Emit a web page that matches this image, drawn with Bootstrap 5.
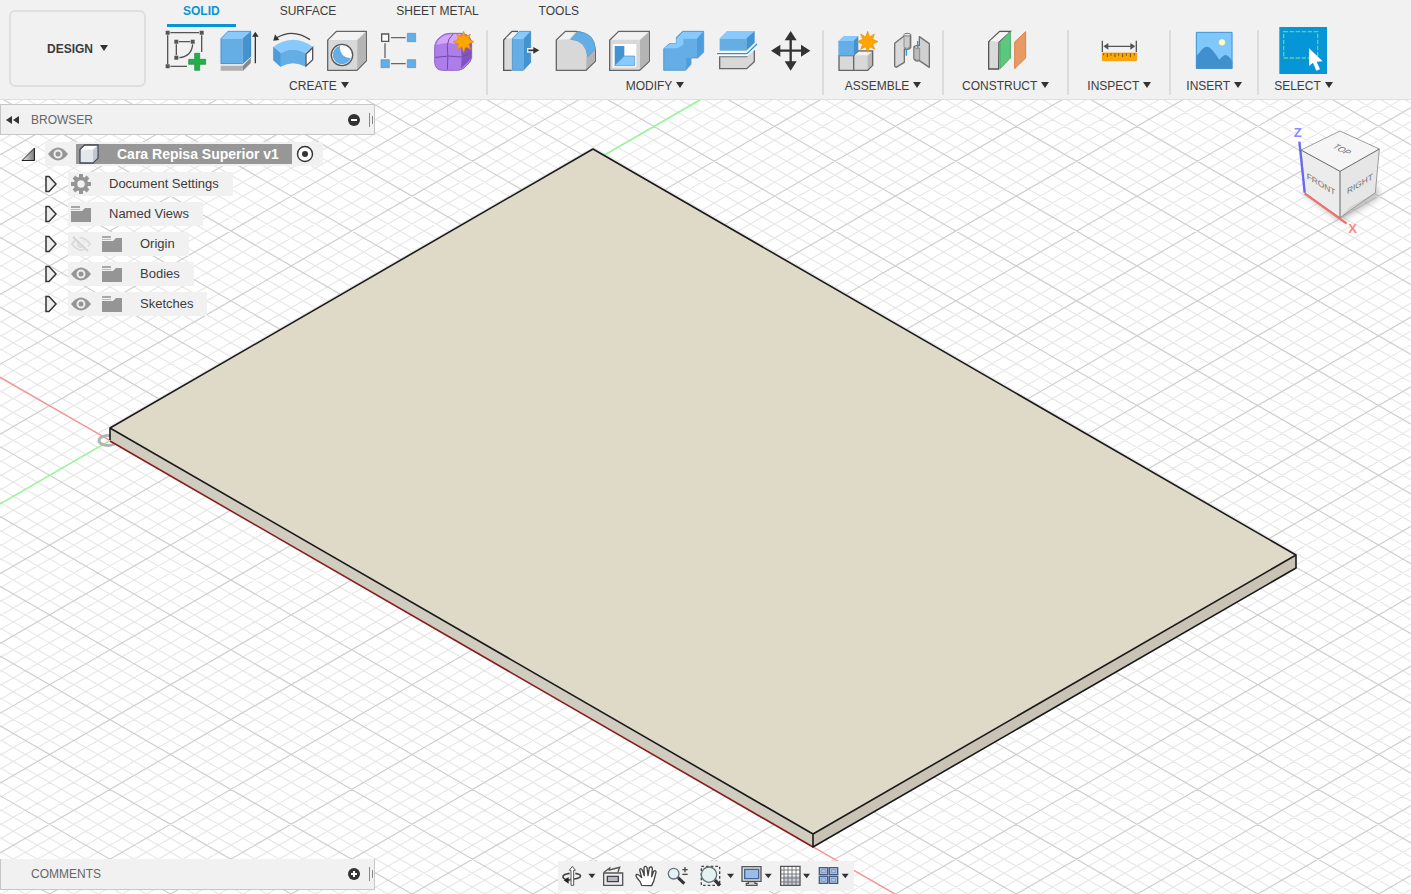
<!DOCTYPE html>
<html lang="en">
<head>
<meta charset="utf-8">
<meta name="viewport" content="width=device-width, initial-scale=1">
<title>Cara Repisa Superior v1</title>
<link href="https://cdn.jsdelivr.net/npm/bootstrap@5.3.0/dist/css/bootstrap.min.css" rel="stylesheet">
<script src="https://cdn.jsdelivr.net/npm/bootstrap@5.3.0/dist/js/bootstrap.bundle.min.js"></script>
<style>
  :root { --panel: #f1f1f1; --ink: #3c3c3c; --accent: #0696d7; --rule: #c6c6c6; }
  body { font-family: "Liberation Sans", Arial, sans-serif; font-size: 12px; color: var(--ink); background: #fff; }
  button { border: 0; background: none; padding: 0; color: inherit; }
  svg { display: block; }
  .ribbon { background: var(--panel); border-bottom: 1px solid #dedede; }
  .workspace { width: 137px; margin: 10px 6px 12px 9px; border: 2px solid #dfdfdf; border-radius: 6px; font-weight: bold; }
  .tabs { padding-left: 15px; gap: 28px; }
  .tabs .nav-link { height: 27px; padding: 0 16px; line-height: 22px; border-radius: 0; border-bottom: 3px solid transparent; color: var(--ink); }
  .tabs .nav-link.active { color: var(--accent); border-bottom-color: var(--accent); font-weight: bold; }
  .tool-group { padding: 0 5px; }
  .tool-single { padding: 0 18px; }
  .tool-narrow { padding: 0 15px; }
  .tool svg { width: 54px; height: 47px; }
  .group-label { line-height: 25px; white-space: nowrap; }
  .divider { width: 2px; margin: 3px 0 4px; background: #dcdcdc; }
  .caret { display: inline-block; border: 4px solid transparent; border-top: 6px solid #333; border-bottom: 0; margin-left: 4px; vertical-align: 2px; }
  .workspace .caret { margin-left: 7px; }
  .dock { width: 375px; height: 31px; background: var(--panel); border: 1px solid var(--rule); color: #666; padding-left: 5px; }
  .dock-title { width: 298px; font-size: 12px; }
  .dock-lead { width: 25px; }
  .tree { margin-top: 7px; display: grid; gap: 6px; font-size: 13px; }
  .tree-row { height: 24px; padding-left: 45px; gap: 11px; }
  .tree-root { padding-left: 21px; gap: 10px; }
  .chip { height: 24px; background: var(--panel); padding: 0 14px 0 3px; gap: 11px; }
  .chip-root { gap: 4px; padding-right: 9px; }
  .chip-text { padding-left: 7px; }
  .root-name { height: 20px; background: #979797; color: #fff; font-size: 14px; font-weight: bold; margin-left: 4px; padding: 0 13px 0 3px; gap: 17px; line-height: 20px; }
  .viewcube { width: 141px; height: 140px; margin-top: 10px; }
  .navbar-view { background: var(--panel); bottom: 3px; }
  .navbar-view svg { height: 30px; }
</style>
</head>
<body>
<div class="vh-100 d-flex flex-column overflow-hidden">

<header class="ribbon d-flex">
  <button class="workspace flex-shrink-0" type="button">DESIGN<span class="caret"></span></button>
  <div class="flex-grow-1">
    <ul class="nav tabs flex-nowrap">
      <li class="nav-item"><a class="nav-link active" href="#">SOLID</a></li>
      <li class="nav-item"><a class="nav-link" href="#">SURFACE</a></li>
      <li class="nav-item"><a class="nav-link" href="#">SHEET METAL</a></li>
      <li class="nav-item"><a class="nav-link" href="#">TOOLS</a></li>
    </ul>
    <div class="d-flex">
      <section class="tool-group text-center">
        <div class="d-flex">
          <button class="tool" type="button" aria-label="Create sketch"><svg viewBox="471 81 162 141"><g fill="none" stroke="#555" stroke-width="4"><path d="M511 98h86M503 106v86M605 106v50M511 199h50M537 125h33M529 133v33M578 133q-3 36-40 40"/></g><path fill="#555" d="M497 92h12v12h-12zM599 92h12v12h-12zM497 193h12v12h-12zM523 119h12v12h-12zM572 119h12v12h-12zM523 167h12v12h-12z"/><path fill="#27ae4c" stroke="#128a36" stroke-width="2" d="M584 160h15v18h18v15h-18v18h-15v-18h-18v-15h18z"/></svg></button>
          <button class="tool" type="button" aria-label="Extrude"><svg viewBox="633 81 162 141"><path fill="#b0b0b0" d="M662 197h67l23-24v16l-23 23h-67z"/><path fill="#888" d="M729 197l23-24v16l-23 23z"/><path fill="#65aee5" d="M662 115h66v77h-66z"/><path fill="#86caff" d="M662 115l22-22h69l-25 22z"/><path fill="#4393d1" d="M728 115l25-22v76l-25 23z"/><path fill="none" stroke="#3a87c3" stroke-width="2" d="M663 116v75h65l24-22V94h-68z"/><path stroke="#333" stroke-width="4" d="M766 190v-84"/><path fill="#333" d="M766 95l10 15h-20z"/></svg></button>
          <button class="tool" type="button" aria-label="Revolve"><svg viewBox="795 81 162 141"><path fill="#65aee5" d="M820 140l23 19v42l-23-20z"/><path fill="#4b9ddc" d="M820 140v41l22 20v-42z"/><path fill="#86caff" d="M820 140q60-42 118 0l-21 20q-36-23-74 0z"/><path fill="#65aee5" d="M842 160q38-23 75 0v40q-38-21-75 0z"/><path fill="#fff" stroke="#555" stroke-width="4" d="M918 162l20-19v36l-20 19z"/><path fill="none" stroke="#444" stroke-width="4" d="M930 119q-52-35-101-5"/><path fill="#333" d="M820 122l5-19 13 17z"/></svg></button>
          <button class="tool" type="button" aria-label="Hole"><svg viewBox="957 81 162 141"><path fill="#d8d8d8" stroke="#666" stroke-width="4" stroke-linejoin="round" d="M983 121l27-27h89v88l-28 29h-88z"/><path fill="#f3f3f3" d="M986 120l25-24h84l-25 24z"/><path fill="#b5b5b5" d="M1072 121l25-24v84l-25 27z"/><circle cx="1026" cy="165" r="32" fill="#fff" stroke="#555" stroke-width="4"/><path fill="#65aee5" d="M1018 138a28 28 0 1 0 34 38q-34-2-34-38z"/><path fill="none" stroke="#4b93cc" stroke-width="2" d="M1018 138q0 36 34 38"/></svg></button>
          <button class="tool" type="button" aria-label="Pattern"><svg viewBox="1119 81 162 141"><path stroke="#666" stroke-width="4" d="M1173 113h44M1155 130v44M1173 191h44"/><path fill="#fff" stroke="#555" stroke-width="4" d="M1145 102h21v22h-21z"/><path fill="#65aee5" stroke="#4b93cc" stroke-width="2" d="M1222 100h25v25h-25zM1143 179h25v24h-25zM1222 179h25v24h-25z"/></svg></button>
          <button class="tool" type="button" aria-label="Create form"><svg viewBox="1281 81 162 141"><path fill="#ad7de9" stroke="#9063ca" stroke-width="3" d="M1304 140q2-18 17-29 10-11 30-11h35q29 4 29 35v38q-3 15-16 24-10 14-32 14h-40q-22-1-23-25z"/><path fill="#d3a7ff" d="M1309 135q7-29 44-33h30q-12 17-19 29-26-6-55 4z"/><path fill="#8055bd" d="M1383 139q22-2 31-14v49q-13 17-31 31 4-35 0-66z"/><path fill="none" stroke="#7548aa" stroke-width="3" d="M1342 209q3-41 0-73 1-20 17-34M1306 172q41-7 77-1 22-6 31-15"/><path fill="#ffa500" stroke="#e58f00" stroke-width="2" d="M1391 94l6 17 14-9-5 16 16 7-16 7 6 16-15-8-6 17-6-17-15 8 6-16-17-7 17-7-6-16 15 9z"/></svg></button>
        </div>
        <button class="group-label" type="button">CREATE<span class="caret"></span></button>
      </section>
      <div class="divider"></div>

      <section class="tool-group text-center">
        <div class="d-flex">
          <button class="tool" type="button" aria-label="Press pull"><svg viewBox="24 81 162 141"><path fill="#dadada" stroke="#555" stroke-width="4" d="M80 211H56v-91l25-26h18"/><path fill="#f5f5f5" d="M62 115l20-18h15l-17 18z"/><path fill="#65aee5" d="M82 116h33v95H82z"/><path fill="#86caff" d="M82 116l21-23h34l-22 23z"/><path fill="#4393d1" d="M115 116l22-23v95l-22 23z"/><path fill="none" stroke="#3a87c3" stroke-width="2" d="M82 117v94h33l22-24V94h-34z"/><path stroke="#f4f4f4" stroke-width="14" d="M126 151h19"/><path stroke="#333" stroke-width="5" d="M130 151h20"/><path fill="#333" d="M163 151l-18 10v-20z"/></svg></button>
          <button class="tool" type="button" aria-label="Fillet"><svg viewBox="186 81 162 141"><path fill="#d8d8d8" stroke="#666" stroke-width="4" d="M214 120l27-26h32q53 9 58 59v31l-28 27h-89z"/><path fill="#f2f2f2" d="M218 119l24-22h27l-16 21z"/><path fill="#b4b4b4" d="M305 168l24-25v40l-26 25z"/><path fill="#65aee5" stroke="#4b93cc" stroke-width="2" d="M257 118l22-24q51 7 52 53l-23 23q-5-49-51-52z"/></svg></button>
          <button class="tool" type="button" aria-label="Shell"><svg viewBox="348 81 162 141"><path fill="#d8d8d8" stroke="#666" stroke-width="4" d="M374 121l27-27h92v90l-29 27h-90z"/><path fill="#f2f2f2" d="M379 119l23-22h87l-25 22z"/><path fill="#b4b4b4" d="M465 121l26-24v86l-26 25z"/><path fill="#fff" d="M383 132h71v70h-71z"/><path fill="#4393d1" d="M389 138h29v31l-29 28z"/><path fill="#86caff" stroke="#4b93cc" stroke-width="2" d="M389 197l29-29h31v29z"/></svg></button>
          <button class="tool" type="button" aria-label="Combine"><svg viewBox="510 81 162 141"><path fill="#65aee5" stroke="#3a87c3" stroke-width="2" d="M536 146l17-15h21v-19l19-18h63v63l-18 17h-20v19l-16 18h-66z"/><path fill="#86caff" d="M538 145l16-13h20v-15l20-21h59l-18 20h-40v18l-18 11z"/><path fill="#4b9ddc" d="M636 116l18-19v59l-18 17zM604 174h12v19l-12 15z"/></svg></button>
          <button class="tool" type="button" aria-label="Split body"><svg viewBox="672 81 162 141"><path fill="#65aee5" d="M704 115h80v37h-80z"/><path fill="#86caff" d="M704 115l22-22h83l-25 22z"/><path fill="#4393d1" d="M784 115l25-22v35l-25 24z"/><path fill="#d8d8d8" stroke="#666" stroke-width="4" d="M704 170h81l23-23v38l-23 21h-81z"/><path fill="none" stroke="#fff" stroke-width="12" d="M696 163h90l31-28"/><path fill="none" stroke="#2492dd" stroke-width="4" d="M696 161h90l30-29"/></svg></button>
          <button class="tool" type="button" aria-label="Move"><svg viewBox="834 81 162 141"><path stroke="#333" stroke-width="7" d="M917 110v84M876 152h83"/><path fill="#333" d="M917 93l18 28h-36zM917 212l18-28h-36zM858 152l28-18v36zM976 152l-28-18v36z"/></svg></button>
        </div>
        <button class="group-label" type="button">MODIFY<span class="caret"></span></button>
      </section>
      <div class="divider"></div>

      <section class="tool-group text-center">
        <div class="d-flex">
          <button class="tool" type="button" aria-label="New component"><svg viewBox="1032 81 162 141"><path fill="#d8d8d8" stroke="#666" stroke-width="4" d="M1062 167h44l14-14h43v43l-15 15h-86zM1106 167v44"/><path fill="#b8b8b8" d="M1148 168l13-12v39l-13 13z"/><path fill="#f3f3f3" d="M1109 166l12-11h37l-11 11z"/><path fill="#65aee5" d="M1060 123h45v44h-45z"/><path fill="#86caff" d="M1060 123l16-15h44l-15 15z"/><path fill="#4393d1" d="M1105 123l15-15v43l-15 16z"/><path fill="#ffa500" stroke="#e58f00" stroke-width="2" d="M1148 94l6 17 14-9-5 16 16 7-16 7 6 16-15-8-6 17-6-17-15 8 6-16-17-7 17-7-6-16 15 9z"/></svg></button>
          <button class="tool" type="button" aria-label="Joint"><svg viewBox="1194 81 162 141"><g stroke="#707070" stroke-width="4" stroke-linejoin="round"><path fill="#d9d9d9" d="M1229 130l33-26q10-7 15 1v38q-5 8-19 4v40l-25 15-4-3z"/><path fill="#ccc" stroke-width="2" d="M1257 106v36q10 7 18-1v-35"/><path fill="#d0d0d0" d="M1303 110l30 21v71l-30-20q-12 4-16-5v-37q6-6 16-3z"/><path fill="#bbb" stroke-width="2" d="M1287 142q9 8 17 2v36q-12 3-17-4z"/></g><ellipse cx="1267" cy="104" rx="10" ry="4" fill="#eee" stroke="#777" stroke-width="3"/><path stroke="#269be9" stroke-width="4" d="M1264 148v19M1298 123v22"/></svg></button>
        </div>
        <button class="group-label" type="button">ASSEMBLE<span class="caret"></span></button>
      </section>
      <div class="divider"></div>

      <section class="tool-single text-center">
        <button class="tool d-block mx-auto" type="button" aria-label="Offset plane"><svg viewBox="117 81 162 141"><path fill="#dadada" stroke="#555" stroke-width="4" d="M176 207h-30v-82l33-31h32l-34 31z"/><path fill="#f4f4f4" d="M150 123l30-26h27l-31 28z"/><path fill="#5bc77f" stroke="#43ad67" stroke-width="3" d="M180 126l31-31v79l-31 32z"/><path fill="#e89a64" stroke="#d4854e" stroke-width="3" d="M224 126l33-31v79l-33 32z"/></svg></button>
        <button class="group-label" type="button">CONSTRUCT<span class="caret"></span></button>
      </section>
      <div class="divider"></div>

      <section class="tool-single text-center">
        <button class="tool d-block mx-auto" type="button" aria-label="Measure"><svg viewBox="453 81 162 141"><path stroke="#555" stroke-width="4" d="M484 122v34M586 122v34M492 139h86"/><path fill="#555" d="M487 139l15-10v20zM583 139l-15-10v20z"/><path fill="#ffa500" stroke="#e89700" stroke-width="2" d="M484 159h103v23H484z"/><path stroke="#7a5200" stroke-width="3" d="M488 160v6M499 160v11M510 160v7M522 160v11M533 160v7M545 160v11M556 160v7M568 160v11M580 160v6"/></svg></button>
        <button class="group-label" type="button">INSPECT<span class="caret"></span></button>
      </section>
      <div class="divider"></div>

      <section class="tool-narrow text-center">
        <button class="tool d-block mx-auto" type="button" aria-label="Insert image"><svg viewBox="729 81 162 141"><path fill="#80c8fc" d="M756 96h109v110H756z"/><path fill="#4090cd" d="M756 169q10-10 17-20 16-17 31 0 15 18 22 30 15-17 21-13 8 1 18 18v22H756z"/><path fill="none" stroke="#4594cf" stroke-width="3" d="M757 97h107v108H757z"/><circle cx="834" cy="127" r="11" fill="#ffffc8" stroke="#71b8dd" stroke-width="2"/></svg></button>
        <button class="group-label" type="button">INSERT<span class="caret"></span></button>
      </section>
      <div class="divider"></div>

      <section class="tool-narrow text-center">
        <button class="tool d-block mx-auto" type="button" aria-label="Select"><svg viewBox="1001 81 162 141"><path fill="#0696d7" d="M1011 81h143v143h-143z"/><path fill="none" stroke="#5bd49b" stroke-width="4" stroke-dasharray="13 5" d="M1024 95h102v79h-102z"/><path fill="#fff" d="M1100 145v53l12-10 10 24 11-4-10-23 18-1z"/></svg></button>
        <button class="group-label" type="button">SELECT<span class="caret"></span></button>
      </section>
    </div>
  </div>
</header>

<main class="flex-grow-1 position-relative overflow-hidden">
  <!-- Modelling canvas: ground grid, axes and the shelf body -->
  <svg class="position-absolute top-0 start-0 w-100 h-100" viewBox="0 100 1411 794" preserveAspectRatio="xMidYMid slice" role="img" aria-label="3D view of the shelf">
    <path id="gridMinor" fill="none" stroke="#e8e8e8" stroke-width="1.2"/>
    <path id="gridMajor" fill="none" stroke="#cfcfcf" stroke-width="1.2"/>
    <path d="M0 377.5L110 440.5M813 847L895 894" stroke="#ff8f8f" stroke-width="1.4"/>
    <path d="M0 504L110 440.5M604 155.500L702 99" stroke="#8dff8d" stroke-width="1.4"/>
    <ellipse cx="108" cy="440.500" rx="9" ry="5" fill="none" stroke="#b4b4b4" stroke-width="3"/>
    <path fill="#dfd9c8" d="M110 428L593 149L1296 555L813 834z"/>
    <path fill="#d0cdc0" d="M110 428L813 834V847L110 440.500z"/>
    <path fill="#c8c3b5" d="M813 834L1296 555V568L813 847z"/>
    <path d="M110 441L813 847" stroke="#8a1c1c" stroke-width="1.6"/>
    <path fill="none" stroke="#1a1a1a" stroke-width="1.6" stroke-linejoin="round" d="M110 440V428L593 149L1296 555V568L813 847V834L110 428M813 834L1296 555"/>
  </svg>

  <div class="position-relative h-100 d-flex flex-column justify-content-between">
    <div class="d-flex justify-content-between align-items-start">
      <aside class="pt-1">
        <div class="dock d-flex align-items-center">
          <button class="dock-lead" type="button" aria-label="Collapse"><svg width="13" height="8"><path fill="#333" d="M0 4l6-4v8zM7 4l6-4v8z"/></svg></button>
          <div class="dock-title flex-grow-1">BROWSER</div>
          <button type="button" aria-label="Hide panel"><svg width="26" height="16"><circle cx="6" cy="8" r="6" fill="#333"/><path stroke="#fff" stroke-width="2" d="M3 8h6"/><path stroke="#888" d="M21.500 1v14M24.500 4v8"/></svg></button>
        </div>
        <div class="tree">
          <div class="tree-row tree-root d-flex align-items-center">
            <svg width="14" height="14"><defs><linearGradient id="fold"><stop stop-color="#eee"/><stop offset="1" stop-color="#777"/></linearGradient></defs><path fill="url(#fold)" stroke="#222" d="M1 13.500L13.500 1v12.500z"/></svg>
            <div class="chip chip-root d-flex align-items-center">
              <svg width="20" height="14"><use href="#eye"/></svg>
              <div class="root-name d-flex align-items-center">
                <svg width="21" height="20"><path fill="#e4e7ec" stroke="#444b58" stroke-width="1.300" d="M1 5.500L5.500 1H19v13l-5 5H1z"/><path fill="#fff" d="M2 5.500L6 2h12l-4 3.500z"/><path fill="#c1c5cd" d="M14 6l4-4v12l-4 4z"/></svg>
                <span>Cara Repisa Superior v1</span>
              </div>
              <input type="radio" class="visually-hidden" id="activeComponent" checked>
              <label for="activeComponent" aria-label="Activate component"><svg width="18" height="18"><circle cx="9" cy="9" r="7.500" fill="#fff" stroke="#333" stroke-width="1.400"/><circle cx="9" cy="9" r="3" fill="#333"/></svg></label>
            </div>
          </div>
          <div class="tree-row d-flex align-items-center"><svg width="12" height="18"><path id="arrow" fill="#eee" stroke="#333" stroke-width="1.500" d="M1 1.500h3l7 7.500-7 7.500H1z"/></svg>
            <div class="chip d-flex align-items-center"><svg width="20" height="20"><g stroke="#959595" stroke-width="4"><path d="M10 0v20M0 10h20M3 3l14 14M17 3L3 17"/></g><circle cx="10" cy="10" r="5.500" fill="#f1f1f1" stroke="#959595" stroke-width="3.500"/></svg><span class="chip-text">Document Settings</span></div></div>
          <div class="tree-row d-flex align-items-center"><svg width="12" height="18"><use href="#arrow"/></svg>
            <div class="chip d-flex align-items-center"><svg width="20" height="16"><g id="folder"><path fill="#959595" d="M0 5h11l3-3h6v14H0z"/><path stroke="#a8a8a8" stroke-width="2" d="M0 1h9"/><path stroke="#bbb" d="M0 3.500h9"/></g></svg><span class="chip-text">Named Views</span></div></div>
          <div class="tree-row d-flex align-items-center"><svg width="12" height="18"><use href="#arrow"/></svg>
            <div class="chip d-flex align-items-center"><svg width="20" height="16"><g fill="none" stroke="#dcdcdc" stroke-width="2"><path d="M1 8q9-12 18 0-9 12-18 0z"/><circle cx="10" cy="8" r="3"/></g><path stroke="#f1f1f1" stroke-width="4" d="M4 0l15 15"/><path stroke="#d5d5d5" stroke-width="2" d="M2 1l15 14"/></svg><svg width="20" height="16"><use href="#folder"/></svg><span class="chip-text">Origin</span></div></div>
          <div class="tree-row d-flex align-items-center"><svg width="12" height="18"><use href="#arrow"/></svg>
            <div class="chip d-flex align-items-center"><svg width="20" height="14"><g id="eye"><path fill="#959595" d="M0 7Q10-6 20 7 10 20 0 7z"/><circle cx="10" cy="7" r="3.500" fill="#959595" stroke="#eee" stroke-width="2"/></g></svg><svg width="20" height="16"><use href="#folder"/></svg><span class="chip-text">Bodies</span></div></div>
          <div class="tree-row d-flex align-items-center"><svg width="12" height="18"><use href="#arrow"/></svg>
            <div class="chip d-flex align-items-center"><svg width="20" height="14"><use href="#eye"/></svg><svg width="20" height="16"><use href="#folder"/></svg><span class="chip-text">Sketches</span></div></div>
        </div>
      </aside>

      <svg class="viewcube" viewBox="0 0 423 420">
        <defs><filter id="soft" x="-30%" y="-30%" width="160%" height="160%"><feGaussianBlur stdDeviation="9"/></filter></defs>
        <path fill="#999" opacity=".6" filter="url(#soft)" d="M95 245L210 335L330 262L318 225L210 200z"/>
        <path fill="#f5f5f5" d="M210 63L328 117L210 184L93 120z"/>
        <path fill="#ececec" d="M93 120L210 184V323L105 250z"/>
        <path fill="#e6e6e6" d="M328 117L210 184V323L316 248z"/>
        <path fill="#d4d4d4" d="M210 323L316 248L240 290z"/>
        <g fill="none" stroke="#8c8c8c" stroke-width="2.500"><path d="M93 120L210 63L328 117L316 248L210 323L105 250L93 120"/><path stroke="#666" stroke-width="3" d="M93 120L210 184L328 117M210 184V323"/></g>
        <path stroke="#6868f0" stroke-width="7" d="M88 95L104 248"/>
        <path stroke="#f07070" stroke-width="7" d="M104 250L230 341"/>
        <g font-family="Liberation Sans, Arial, sans-serif" text-anchor="middle">
          <text x="83" y="82" font-size="39" font-weight="bold" fill="#8a8aff">Z</text>
          <text x="248" y="370" font-size="39" font-weight="bold" fill="#ff8585">X</text>
          <g fill="#6c7177" font-size="25">
            <text transform="translate(153 231) skewY(31)">FRONT</text>
            <text transform="translate(270 230) skewY(-31)">RIGHT</text>
            <text transform="translate(208 124) rotate(28) skewX(-28)">TOP</text>
          </g>
        </g>
      </svg>
    </div>

    <div class="dock d-flex align-items-center border-top-0 mb-1">
      <span class="dock-lead"></span>
      <div class="dock-title flex-grow-1">COMMENTS</div>
      <button type="button" aria-label="Show comments"><svg width="26" height="16"><circle cx="6" cy="8" r="6" fill="#333"/><path stroke="#fff" stroke-width="2" d="M3 8h6M6 5v6"/><path stroke="#888" d="M21.500 1v14M24.500 4v8"/></svg></button>
    </div>
  </div>

  <nav class="navbar-view position-absolute start-50 translate-middle-x d-flex" aria-label="View controls">
    <button type="button" aria-label="Orbit"><svg width="40" viewBox="45 33 120 90"><path fill="none" stroke="#444" stroke-width="5" d="M80 70q-22 3-20 12 4 8 22 8M97 70q18 3 15 10-5 6-30 8"/><path fill="#fff" stroke="#555" stroke-width="3" d="M84 106V61h-5l9-12 9 12h-5v45z"/><path fill="#222" d="M62 91l15-10v20z"/><path fill="#333" d="M136 71h21l-10 14z"/></svg></button>
    <button type="button" aria-label="Look at"><svg width="30" viewBox="165 33 90 90"><path fill="#eee" stroke="#555" stroke-width="4" d="M182 69h57v37h-57z"/><path fill="#b5b9c4" stroke="#444" stroke-width="4" d="M193 79h33v16h-33z"/><path fill="none" stroke="#555" stroke-width="4" d="M183 67l17-13-1 6 31-8-5 14"/></svg></button>
    <button type="button" aria-label="Pan"><svg width="35" viewBox="255 33 105 90"><path fill="#fff" stroke="#444" stroke-width="4" stroke-linejoin="round" d="M296 106q-4-13-13-21-7-10-2-12 6-1 15 10l-6-23q2-8 8 0l6 17-1-25q5-6 9 1l3 24 4-24q7-5 9 2l-2 25 6-16q7-5 7 3l-7 27q-4 7-6 13z"/></svg></button>
    <button type="button" aria-label="Zoom"><svg width="30" viewBox="360 33 90 90"><path stroke="#333" stroke-width="9" d="M405 83l19 18"/><circle cx="392" cy="71" r="16" fill="#e4f2f5" stroke="#65717a" stroke-width="4"/><path fill="none" stroke="#444" stroke-width="4" d="M418 59h16M426 51v16M418 73h16"/></svg></button>
    <button type="button" aria-label="Fit"><svg width="45" viewBox="450 33 135 90"><path fill="none" stroke="#444" stroke-width="4" stroke-dasharray="8 6" d="M475 49h55v57h-55z"/><path stroke="#333" stroke-width="10" d="M515 90l16 16"/><circle cx="498" cy="74" r="23" fill="#e4f2f2" stroke="#65717a" stroke-width="4"/><path fill="#333" d="M552 71h21l-10 14z"/></svg></button>
    <button type="button" aria-label="Display settings"><svg width="37" viewBox="585 33 111 90"><path fill="#ddd" stroke="#555" stroke-width="4" d="M597 50h57v44h-57zM616 95h20v5h6v6h-32v-6h6z"/><path fill="#9dbde6" stroke="#426594" stroke-width="4" d="M605 58h42v28h-42z"/><path fill="#333" d="M665 71h21l-10 14z"/></svg></button>
    <button type="button" aria-label="Grid and snaps"><svg width="40" viewBox="696 33 120 90"><path fill="#fff" d="M713 49h58v57h-58z"/><path fill="#c7cbdb" d="M720 77h50v28h-50z"/><path fill="none" stroke="#777" stroke-width="3" d="M723 49v57M735 49v57M747 49v57M759 49v57M713 60h57M713 72h57M713 84h57M713 96h57"/><path fill="none" stroke="#555" stroke-width="4" d="M713 49h58v57h-58z"/><path fill="#333" d="M780 71h21l-10 14z"/></svg></button>
    <button type="button" aria-label="Viewports"><svg width="39" viewBox="816 33 117 90"><path fill="#abc3e4" stroke="#445c85" stroke-width="4" d="M829 53h25v21h-25zM859 53h25v21h-25zM829 79h25v21h-25zM859 79h25v21h-25z"/><path fill="none" stroke="#6e89b5" stroke-width="2" d="M835 59h13v9h-13zM865 59h13v9h-13zM835 85h13v9h-13zM865 85h13v9h-13z"/><path fill="#333" d="M896 71h21l-10 14z"/></svg></button>
  </nav>
</main>
</div>
<script>
  // Isometric ground grid: five minor cells to each major cell, anchored on the origin.
  const origin = { x: 110, y: 440.4 }, slope = 34.9 / 60.41, cell = 69.8 / 5, width = 1411;
  const lines = { gridMinor: '', gridMajor: '' };
  for (let k = -90; k <= 90; k++) {
    const target = k % 5 === 0 ? 'gridMajor' : 'gridMinor';
    for (const s of [slope, -slope]) {
      const y = x => (origin.y + s * (x - origin.x) + k * cell).toFixed(2);
      lines[target] += `M0 ${y(0)}L${width} ${y(width)}`;
    }
  }
  for (const id in lines) document.getElementById(id).setAttribute('d', lines[id]);
</script>
</body>
</html>
